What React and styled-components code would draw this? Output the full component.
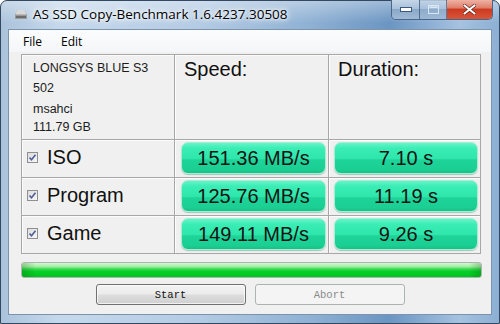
import React from "react";
import styled, { createGlobalStyle } from "styled-components";

const GlobalStyle = createGlobalStyle`
  html, body {
    margin: 0;
    padding: 0;
    background: #fff;
  }
  body {
    font-family: "Liberation Sans", Arial, sans-serif;
  }
`;

const rows = [
  { name: "ISO", speed: "151.36 MB/s", time: "7.10 s" },
  { name: "Program", speed: "125.76 MB/s", time: "11.19 s" },
  { name: "Game", speed: "149.11 MB/s", time: "9.26 s" },
];

const App = () => {
  return (
    <>
      <GlobalStyle />
      <Window>
        <TitleBar>
          <AppIcon>
            <svg width="12" height="11" viewBox="0 0 12 11">
              <path d="M2 1h8l2 5v4H0V6z" fill="#9a9a9a" />
              <path d="M2 1h8l1.6 4.5H0.4z" fill="#d8d8d8" />
              <rect x="1" y="7" width="10" height="2" fill="#6c6c6c" />
            </svg>
          </AppIcon>
          <Title>AS SSD Copy-Benchmark 1.6.4237.30508</Title>
          <Caption>
            <CapButton $w={27}>
              <svg width="12" height="5"><rect x="0.5" y="0.5" width="11" height="4" fill="#fff" stroke="#3b5a7d" /></svg>
            </CapButton>
            <CapButton $w={26} $faded>
              <svg width="11" height="9"><rect x="0.5" y="0.5" width="10" height="8" fill="none" stroke="#e6eef7" /><rect x="1.5" y="1.5" width="8" height="1.5" fill="#e6eef7" /></svg>
            </CapButton>
            <CloseButton>
              <svg width="13" height="11" viewBox="0 0 13 11">
                <path d="M1.5 1.5l10 8M11.5 1.5l-10 8" stroke="#5b1a10" strokeWidth="3.4" strokeLinecap="round" />
                <path d="M1.5 1.5l10 8M11.5 1.5l-10 8" stroke="#fff" strokeWidth="2.2" strokeLinecap="round" />
              </svg>
            </CloseButton>
          </Caption>
        </TitleBar>
        <Client>
          <MenuBar>
            <MenuItem>File</MenuItem>
            <MenuItem>Edit</MenuItem>
          </MenuBar>
          <Content>
            <ResultGrid>
              <DriveCell>
                <DriveLine $h={20}>LONGSYS BLUE S3</DriveLine>
                <DriveLine $h={21}>502</DriveLine>
                <DriveLine $h={18}>msahci</DriveLine>
                <DriveLine $h={18}>111.79 GB</DriveLine>
              </DriveCell>
              <HeadCell>Speed:</HeadCell>
              <HeadCell>Duration:</HeadCell>
              {rows.map((r) => (
                <React.Fragment key={r.name}>
                  <LabelCell>
                    <Check>
                      <svg width="9" height="9" viewBox="0 0 9 9">
                        <path d="M1.5 4.5l2 2.2L7.5 1.8" fill="none" stroke="#4d5f96" strokeWidth="1.6" />
                      </svg>
                    </Check>
                    {r.name}
                  </LabelCell>
                  <ValueCell $left={6}>
                    <Pill>{r.speed}</Pill>
                  </ValueCell>
                  <ValueCell $left={5}>
                    <Pill>{r.time}</Pill>
                  </ValueCell>
                </React.Fragment>
              ))}
            </ResultGrid>
            <Progress>
              <ProgressFill />
            </Progress>
            <Buttons>
              <Button>Start</Button>
              <Button disabled>Abort</Button>
            </Buttons>
          </Content>
        </Client>
      </Window>
    </>
  );
};

export default App;

const Window = styled.div`
  width: 500px;
  height: 324px;
  box-sizing: border-box;
  display: flex;
  flex-direction: column;
  padding: 0 7px 8px;
  border: 1px solid #34495f;
  border-radius: 7px 7px 0 0;
  background:
    linear-gradient(180deg, rgba(255, 255, 255, 0.35) 0px, rgba(255, 255, 255, 0) 22px),
    linear-gradient(90deg, #aac3dc 0%, #c6d9ec 12%, #b3cbe4 40%, #8fb1d4 62%, #6b95c2 78%, #a5c2e0 92%, #8cafd3 100%);
`;

const TitleBar = styled.div`
  height: 28px;
  display: flex;
  align-items: flex-start;
  position: relative;
`;

const AppIcon = styled.div`
  width: 12px;
  height: 11px;
  margin: 8px 6px 0 7px;
  display: flex;
`;

const Title = styled.div`
  font-family: "Open Sans", "Noto Sans", sans-serif;
  font-size: 13.5px;
  color: #000;
  line-height: 16px;
  margin-top: 5px;
  text-shadow: 0 0 6px #fff, 0 0 10px rgba(255, 255, 255, 0.9), 0 0 3px #fff;
  white-space: nowrap;
`;

const Caption = styled.div`
  position: absolute;
  top: -1px;
  right: -1px;
  display: flex;
  height: 19px;
  border: 1px solid #4b6584;
  border-top: none;
  border-radius: 0 0 5px 5px;
  overflow: hidden;
`;

const CapButton = styled.div`
  width: ${(p) => p.$w}px;
  display: flex;
  align-items: center;
  justify-content: center;
  border-right: 1px solid rgba(60, 90, 125, 0.8);
  background: linear-gradient(180deg, #c5d6e8 0%, #a9c1da 45%, #8aa8c8 50%, #9fbad6 100%);
  opacity: ${(p) => (p.$faded ? 0.85 : 1)};
`;

const CloseButton = styled.div`
  width: 45px;
  display: flex;
  align-items: center;
  justify-content: center;
  background: linear-gradient(180deg, #eeb2a4 0%, #e0806b 40%, #cc3b22 50%, #d9553a 100%);
`;

const Client = styled.div`
  flex: 1;
  display: flex;
  flex-direction: column;
  border: 1px solid #7d93ab;
  background: #f0f0f0;
`;

const MenuBar = styled.div`
  height: 22px;
  display: flex;
  align-items: center;
  padding-left: 6px;
  background: linear-gradient(180deg, #fbfcfd 0%, #f4f6f9 100%);
`;

const MenuItem = styled.span`
  font-family: "Open Sans", "Noto Sans", sans-serif;
  font-size: 12px;
  color: #000;
  padding: 0 7px 0 8px;
  margin-right: 4px;
`;

const Content = styled.div`
  flex: 1;
  padding: 2px 0 0 12px;
  display: flex;
  flex-direction: column;
`;

const ResultGrid = styled.div`
  width: 460px;
  box-sizing: border-box;
  display: grid;
  grid-template-columns: 152px 153px 151px;
  grid-template-rows: 84px 37px 37px 37px;
  gap: 1px;
  border: 1px solid #a7a7a7;
  background: #a7a7a7;
`;

const Cell = styled.div`
  background: #f0f0f0;
  box-shadow: inset 1px 1px 0 #fcfcfc;
`;

const DriveCell = styled(Cell)`
  padding: 3px 0 0 11px;
  font-size: 12.5px;
  color: #1c1c1c;
`;

const DriveLine = styled.div`
  height: ${(p) => p.$h}px;
  line-height: 20px;
`;

const HeadCell = styled(Cell)`
  font-size: 20px;
  color: #111;
  padding: 2px 0 0 9px;
  line-height: 24px;
`;

const LabelCell = styled(Cell)`
  display: flex;
  align-items: center;
  font-size: 20px;
  color: #111;
  padding-left: 5px;
  padding-bottom: 3px;
`;

const Check = styled.span`
  width: 11px;
  height: 11px;
  box-sizing: border-box;
  border: 1px solid #8e8f8f;
  background: linear-gradient(135deg, #dcdcdc, #f8f8f8);
  display: flex;
  align-items: center;
  justify-content: center;
  margin-right: 9px;
`;

const ValueCell = styled(Cell)`
  padding: 2px 2px 3px ${(p) => p.$left}px;
  display: flex;
`;

const Pill = styled.div`
  flex: 1;
  box-sizing: border-box;
  border-radius: 7px;
  border: 1px solid #a8ecd2;
  box-shadow: 0 1px 1px rgba(0, 120, 80, 0.35);
  background: linear-gradient(180deg, #66f4c8 0%, #3aedb4 18%, #2ee6ab 52%, #1ed499 56%, #1bcf93 88%, #17c188 100%);
  display: flex;
  align-items: center;
  justify-content: center;
  font-size: 20px;
  color: #141414;
  padding-top: 1px;
`;

const Progress = styled.div`
  width: 461px;
  height: 16px;
  box-sizing: border-box;
  margin-top: 8px;
  border: 1px solid #b2b2b2;
  border-radius: 3px;
  background: #e6e6e6;
  overflow: hidden;
  display: flex;
`;

const ProgressFill = styled.div`
  flex: 1;
  background:
    linear-gradient(90deg, rgba(0, 80, 0, 0.25) 0px, rgba(0, 80, 0, 0) 14px, rgba(0, 80, 0, 0) 447px, rgba(0, 80, 0, 0.25) 100%),
    linear-gradient(180deg, #d3f8d3 0%, #a5eea5 25%, #34d94a 45%, #06d028 60%, #00c41f 100%);
`;

const Buttons = styled.div`
  display: flex;
  justify-content: center;
  gap: 9px;
  margin-top: 6px;
  padding-right: 12px;
`;

const Button = styled.button`
  width: 150px;
  height: 21px;
  box-sizing: border-box;
  padding: 0;
  border-radius: 3px;
  font-family: "Liberation Mono", monospace;
  font-size: 10.5px;
  color: #111;
  border: 1px solid #707070;
  background: linear-gradient(180deg, #f3f3f3 0%, #ebebeb 48%, #dddddd 52%, #cfcfcf 100%);
  box-shadow: inset 0 0 0 1px rgba(255, 255, 255, 0.7);

  &:disabled {
    color: #8a8a8a;
    border-color: #adb2b5;
    background: #f4f4f4;
    box-shadow: none;
  }
`;
